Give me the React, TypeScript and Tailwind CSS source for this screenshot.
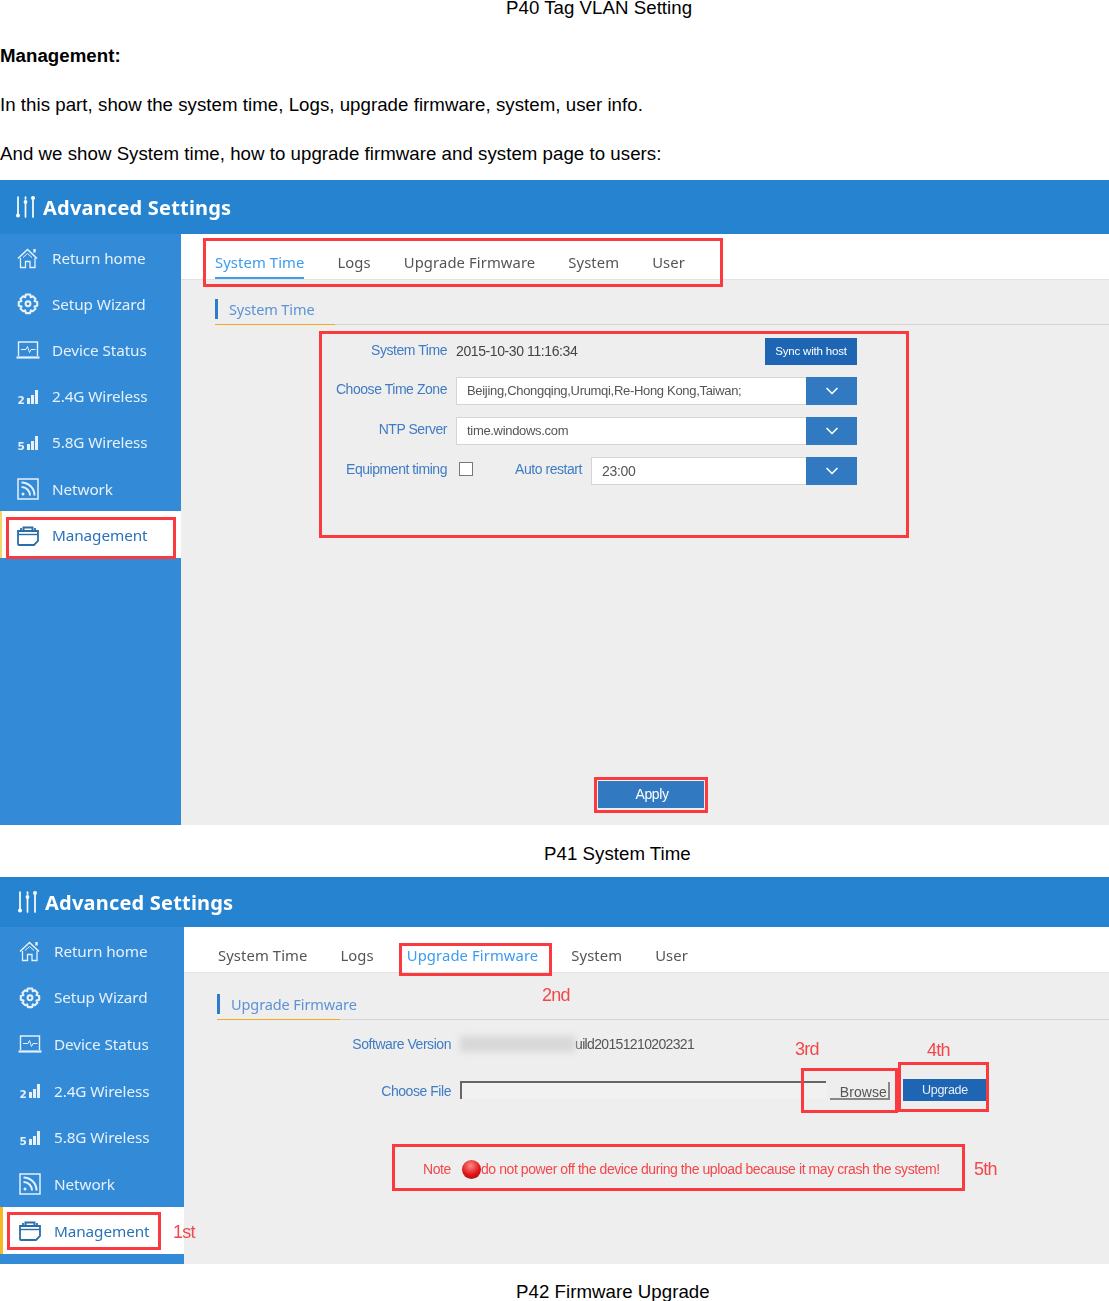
import { ReactNode } from 'react'
import { ChevronDown } from 'lucide-react'

const ARIAL = 'font-["Liberation_Sans",Arial,sans-serif]'
const UI = 'font-["Noto_Sans","Open_Sans",sans-serif]'

// sidebar icons
function HomeIcon() {
  return (
    <svg width="22" height="22" viewBox="0 0 22 22" fill="none" stroke="currentColor" strokeWidth="1.300">
      <path d="M1 11.500 10.500 2.500 20 11.500" strokeWidth="1.600" />
      <path d="M3.500 11v9.500h5v-6h4.500v6h5V11" />
      <path d="M6 10.500 10.500 6.500 15 10.500" strokeWidth="1" />
      <path d="M17.500 2v3.500" strokeWidth="2.400" />
    </svg>
  )
}

function GearIcon() {
  return (
    <svg width="22" height="22" viewBox="0 0 22 22" fill="none" stroke="currentColor" strokeWidth="2.100" strokeLinejoin="round">
      <path d="M8.800 1.500h4.400l.6 2.700 2-.9 2.700 2.500-1 2.300 2.700.8v3.800l-2.700.8 1 2.300-2.700 2.500-2-.9-.6 2.700H8.800l-.6-2.700-2 .9-2.700-2.500 1-2.300-2.700-.8V8.900l2.700-.8-1-2.300 2.700-2.500 2 .9z" />
      <circle cx="11" cy="10.800" r="2.400" />
    </svg>
  )
}

function LaptopIcon() {
  return (
    <svg width="24" height="20" viewBox="0 0 24 20" fill="none" stroke="currentColor" strokeWidth="1.400">
      <path d="M2.500 16V2h19v14" />
      <path d="M0.500 17.500h23" strokeWidth="2.200" />
      <path d="M5 9.500h5l1.500-3 2 6 1.500-3h4.500" strokeWidth="1" />
    </svg>
  )
}

function SignalIcon({ digit }: { digit: string }) {
  return (
    <span className="flex h-[14px] w-[21px] items-end gap-[1px]">
      <span className='mr-[1px] font-["DejaVu_Sans",sans-serif] text-[10.500px] leading-[8px] font-bold'>{digit}</span>
      <span className="h-[6px] w-[3px] bg-current" />
      <span className="h-[9px] w-[3px] bg-current" />
      <span className="h-[14px] w-[3px] bg-current" />
    </span>
  )
}

function NetworkIcon() {
  return (
    <svg width="22" height="22" viewBox="0 0 22 22" fill="none" stroke="currentColor" strokeWidth="1.500">
      <rect x="1" y="1" width="20" height="20" />
      <path d="M4.500 9c4.800 0 8.500 3.700 8.500 8.500" strokeWidth="2" />
      <path d="M4.500 4.500c7.200 0 13 5.800 13 13" strokeWidth="2" />
      <circle cx="6" cy="16" r="1.500" fill="currentColor" stroke="none" />
    </svg>
  )
}

function ManagementIcon() {
  return (
    <svg width="22" height="20" viewBox="0 0 22 20" fill="none" stroke="#2a6ea8" strokeWidth="1.800">
      <path d="M1 5h20v10l-4 4H2a1 1 0 0 1-1-1z" />
      <path d="M1 8.500h20" strokeWidth="1.400" />
      <path d="M6.500 5V1.500h9V5" strokeWidth="2" />
      <path d="M4 4.500V2M18 4.500V2" />
    </svg>
  )
}

function SlidersIcon() {
  return (
    <svg width="22" height="24" viewBox="0 0 22 24" fill="none" stroke="#fff" strokeWidth="1.700" strokeLinecap="round">
      <path d="M3 2v18M10.500 2v2M10.500 9v13M18 5v17" />
      <circle cx="3" cy="20.500" r="2" fill="#fff" stroke="none" />
      <circle cx="10.500" cy="7" r="1.900" fill="#fff" stroke="none" />
      <circle cx="18" cy="3" r="2" fill="#fff" stroke="none" />
    </svg>
  )
}

const MENU: { label: string; icon: ReactNode }[] = [
  { label: 'Return home', icon: <HomeIcon /> },
  { label: 'Setup Wizard', icon: <GearIcon /> },
  { label: 'Device Status', icon: <LaptopIcon /> },
  { label: '2.4G Wireless', icon: <SignalIcon digit="2" /> },
  { label: '5.8G Wireless', icon: <SignalIcon digit="5" /> },
  { label: 'Network', icon: <NetworkIcon /> },
]

function Sidebar({ wide }: { wide?: boolean }) {
  return (
    <aside className={`${wide ? 'w-[184px]' : 'w-[181px]'} shrink-0 bg-[#338ad6]`}>
      {MENU.map(m => (
        <div
          key={m.label}
          className={`flex items-center pt-[2px] text-[#e6f1fb] ${wide ? 'h-[46.600px] pl-[18px]' : 'h-[46.200px] pl-[16px]'}`}
        >
          <span className="flex w-[24px] shrink-0 justify-center">{m.icon}</span>
          <span className={`${UI} ml-[12px] text-[15.300px] tracking-[-0.1px]`}>{m.label}</span>
        </div>
      ))}
      <div
        className={`flex h-[47px] items-center bg-white pt-[2px] ${
          wide ? 'border-l-[3px] border-[#f5b921] pl-[15px]' : 'border-l-[2px] border-[#f5d66a] pl-[14px]'
        }`}
      >
        <span className="flex w-[24px] shrink-0 justify-center">
          <ManagementIcon />
        </span>
        <span className={`${UI} ml-[12px] text-[15.300px] tracking-[-0.1px] text-[#2a72b8]`}>Management</span>
      </div>
    </aside>
  )
}

function Header({ tall }: { tall?: boolean }) {
  return (
    <header className={`flex items-center bg-[#2583d0] ${tall ? 'h-[54px] pl-[15px]' : 'h-[50px] pl-[17px]'}`}>
      <SlidersIcon />
      <span className={`${UI} ml-[6px] pt-[1px] text-[20px] font-bold tracking-[0.2px] text-white`}>Advanced Settings</span>
    </header>
  )
}

const TABS = ['System Time', 'Logs', 'Upgrade Firmware', 'System', 'User']

function Tabs({ active, underline }: { active: string; underline?: boolean }) {
  return (
    <div className="flex h-[46px] gap-[33px] border-b border-[#e2e2e2] bg-white pl-[34px]">
      {TABS.map(t => (
        <div
          key={t}
          className={`${UI} flex items-center border-b-2 pt-[14px] text-[14.800px] tracking-[0.1px] ${
            t === active ? 'text-[#3d9bf0]' : 'text-[#555555]'
          } ${t === active && underline ? 'border-[#3d9bf0]' : 'border-transparent'}`}
        >
          {t}
        </div>
      ))}
    </div>
  )
}

function SectionTitle({ children, orange }: { children: string; orange: string }) {
  return (
    <div className="relative ml-[34px] flex h-[26px] items-center border-b border-[#d5d5d5] pb-[5px]">
      <span className="h-[20px] w-[3px] bg-[#2e7cc9]" />
      <span className={`${UI} ml-[11px] pt-[2px] text-[14.500px] tracking-[-0.1px] text-[#5b93d6]`}>{children}</span>
      <span className={`absolute bottom-[-1px] left-0 h-[1px] bg-[#f5a623] ${orange}`} />
    </div>
  )
}

function Label({ children, className }: { children: string; className?: string }) {
  return (
    <span className={`${ARIAL} text-right text-[14px] tracking-[-0.45px] text-[#3f7cc4] ${className ?? 'w-[130px]'}`}>
      {children}
    </span>
  )
}

function Select({ value, className, large }: { value: string; className?: string; large?: boolean }) {
  return (
    <div className={`flex h-[28px] border border-[#d5d5d5] bg-white ${className ?? ''}`}>
      <span
        className={`${ARIAL} flex-1 self-center pl-[10px] text-[#555555] ${
          large ? 'text-[14px] tracking-[-0.3px]' : 'text-[13px] tracking-[-0.31px]'
        }`}
      >
        {value}
      </span>
      <span className="-my-[1px] -mr-[1px] flex w-[51px] items-center justify-center bg-[#3179c1]">
        <ChevronDown size={20} color="#fff" strokeWidth={2} />
      </span>
    </div>
  )
}

// red marker rectangles drawn on top of the screenshots
function Mark({ className }: { className: string }) {
  return <div className={`pointer-events-none absolute border-[3px] border-[#fb3a3f] ${className}`} />
}

function Note({ children, className }: { children: string; className: string }) {
  return (
    <span className={`${ARIAL} absolute text-[18px] leading-[20px] tracking-[-0.8px] text-[#f4474a] ${className}`}>
      {children}
    </span>
  )
}

function SystemTimePanel() {
  return (
    <section className="relative h-[645px] overflow-hidden bg-[#eeeeee] blur-[0.3px]">
      <Header tall />
      <div className="flex h-[591px]">
        <Sidebar />
        <div className="flex flex-1 flex-col">
          <Tabs active="System Time" underline />
          <div className="mt-[19px]">
            <SectionTitle orange="w-[120px]">System Time</SectionTitle>
          </div>
          <div className="mt-[13px] ml-[136px] flex w-[540px] flex-col">
            <div className="flex h-[27px] items-center">
              <Label className="w-[130px] pb-[2px]">System Time</Label>
              <span className={`${ARIAL} ml-[9px] flex-1 pb-[1px] text-[14px] tracking-[-0.4px] text-[#444444]`}>
                2015-10-30 11:16:34
              </span>
              <button className={`${ARIAL} h-[27px] w-[92px] bg-[#1e66b4] pt-[1px] text-[11.500px] tracking-[-0.2px] text-white`}>
                Sync with host
              </button>
            </div>
            <div className="mt-[12px] flex items-center">
              <Label className="w-[130px] pb-[3px]">Choose Time Zone</Label>
              <Select className="ml-[9px] flex-1" value="Beijing,Chongqing,Urumqi,Re-Hong Kong,Taiwan;" />
            </div>
            <div className="mt-[12px] flex items-center">
              <Label className="w-[130px] pb-[3px]">NTP Server</Label>
              <Select className="ml-[9px] flex-1" value="time.windows.com" />
            </div>
            <div className="mt-[12px] flex items-center">
              <Label className="w-[130px] pb-[3px]">Equipment timing</Label>
              <span className="ml-[12px] h-[14px] w-[14px] -translate-y-[2px] border border-[#777777] bg-white" />
              <Label className="ml-[41px] w-[68px] pb-[3px]">Auto restart</Label>
              <Select className="ml-[9px] flex-1" value="23:00" large />
            </div>
          </div>
          <div className="mt-auto mb-[17px] ml-[417px] flex h-[27px] w-[106px] items-center justify-center bg-[#3179c1]">
            <span className={`${ARIAL} ml-[2px] text-[14px] tracking-[-0.4px] text-white`}>Apply</span>
          </div>
        </div>
      </div>
      <Mark className="top-[58px] left-[203px] h-[49px] w-[520px]" />
      <Mark className="top-[151px] left-[319px] h-[207px] w-[590px]" />
      <Mark className="top-[597px] left-[594px] h-[36px] w-[114px]" />
      <Mark className="top-[337px] left-[6px] h-[42px] w-[170px]" />
    </section>
  )
}

function FirmwarePanel() {
  return (
    <section className="relative h-[387px] overflow-hidden bg-[#eeeeee] blur-[0.6px]">
      <Header />
      <div className="flex h-[337px]">
        <Sidebar wide />
        <div className="flex flex-1 flex-col">
          <Tabs active="Upgrade Firmware" />
          <div className="mt-[21px] -ml-[1px]">
            <SectionTitle orange="w-[123px]">Upgrade Firmware</SectionTitle>
          </div>
          <div className="mt-[11px] ml-[137px] flex flex-col">
            <div className="flex h-[26px] items-center">
              <Label>Software Version</Label>
              <span className="ml-[9px] h-[16px] w-[115px] bg-[#d8d8d8] blur-[3px]" />
              <span className={`${ARIAL} text-[14px] tracking-[-0.65px] text-[#555555]`}>uild20151210202321</span>
            </div>
            <div className="mt-[20px] flex items-start">
              <Label className="w-[130px] pt-[4px]">Choose File</Label>
              <div className="mt-[4px] ml-[9px] h-[18px] w-[366px] border-t-2 border-l-2 border-[#666666] bg-[#f1f1f1]" />
              <button className="mt-[5px] ml-[4px] flex h-[18px] w-[60px] items-end justify-end border-r-2 border-b-2 border-[#888888] pr-[1px]">
                <span className={`${ARIAL} text-[14px] leading-[12px] tracking-[0.1px] text-[#555555]`}>Browse</span>
              </button>
              <button className={`${ARIAL} mt-[2px] ml-[13px] h-[22px] w-[84px] bg-[#1e66b4] text-[12.500px] tracking-[-0.3px] text-[#e8eef6]`}>
                Upgrade
              </button>
            </div>
            <div className="mt-[57px] ml-[102px] flex items-center">
              <span className={`${ARIAL} text-[14px] tracking-[-0.4px] text-[#f4474a]`}>Note</span>
              <span className="ml-[11px] h-[19px] w-[19px] rounded-full bg-[radial-gradient(circle_at_45%_30%,#ff8a8a,#e01515_55%,#8c1010)]" />
              <span className={`${ARIAL} text-[14px] tracking-[-0.42px] text-[#f4474a]`}>
                do not power off the device during the upload because it may crash the system!
              </span>
            </div>
          </div>
        </div>
      </div>
      <Mark className="top-[66px] left-[399px] h-[33px] w-[153px]" />
      <Mark className="top-[191px] left-[801px] h-[45px] w-[97px]" />
      <Mark className="top-[185px] left-[898px] h-[50px] w-[91px]" />
      <Mark className="top-[267px] left-[392px] h-[47px] w-[573px]" />
      <Mark className="top-[335px] left-[7px] h-[38px] w-[154px]" />
      <Note className="top-[108px] left-[542px]">2nd</Note>
      <Note className="top-[162px] left-[795px]">3rd</Note>
      <Note className="top-[163px] left-[927px]">4th</Note>
      <Note className="top-[282px] left-[974px]">5th</Note>
      <Note className="top-[345px] left-[173px]">1st</Note>
    </section>
  )
}

export default function App() {
  return (
    <div className={`${ARIAL} h-[1301px] w-[1109px] overflow-hidden bg-white text-[18.670px] tracking-[0.04px] text-black`}>
      <p className="mb-[29px] pl-[506px] leading-[16px]">P40 Tag VLAN Setting</p>
      <p className="mb-[28px] leading-[21px] font-bold">Management:</p>
      <p className="mb-[28px] leading-[21px]">In this part, show the system time, Logs, upgrade firmware, system, user info.</p>
      <p className="mb-[16px] leading-[21px]">And we show System time, how to upgrade firmware and system page to users:</p>

      <SystemTimePanel />
      <p className="flex h-[52px] items-center pt-[5px] pl-[544px] leading-[21px]">P41 System Time</p>
      <FirmwarePanel />
      <p className="pt-[17px] pl-[516px] leading-[21px]">P42 Firmware Upgrade</p>
    </div>
  )
}
